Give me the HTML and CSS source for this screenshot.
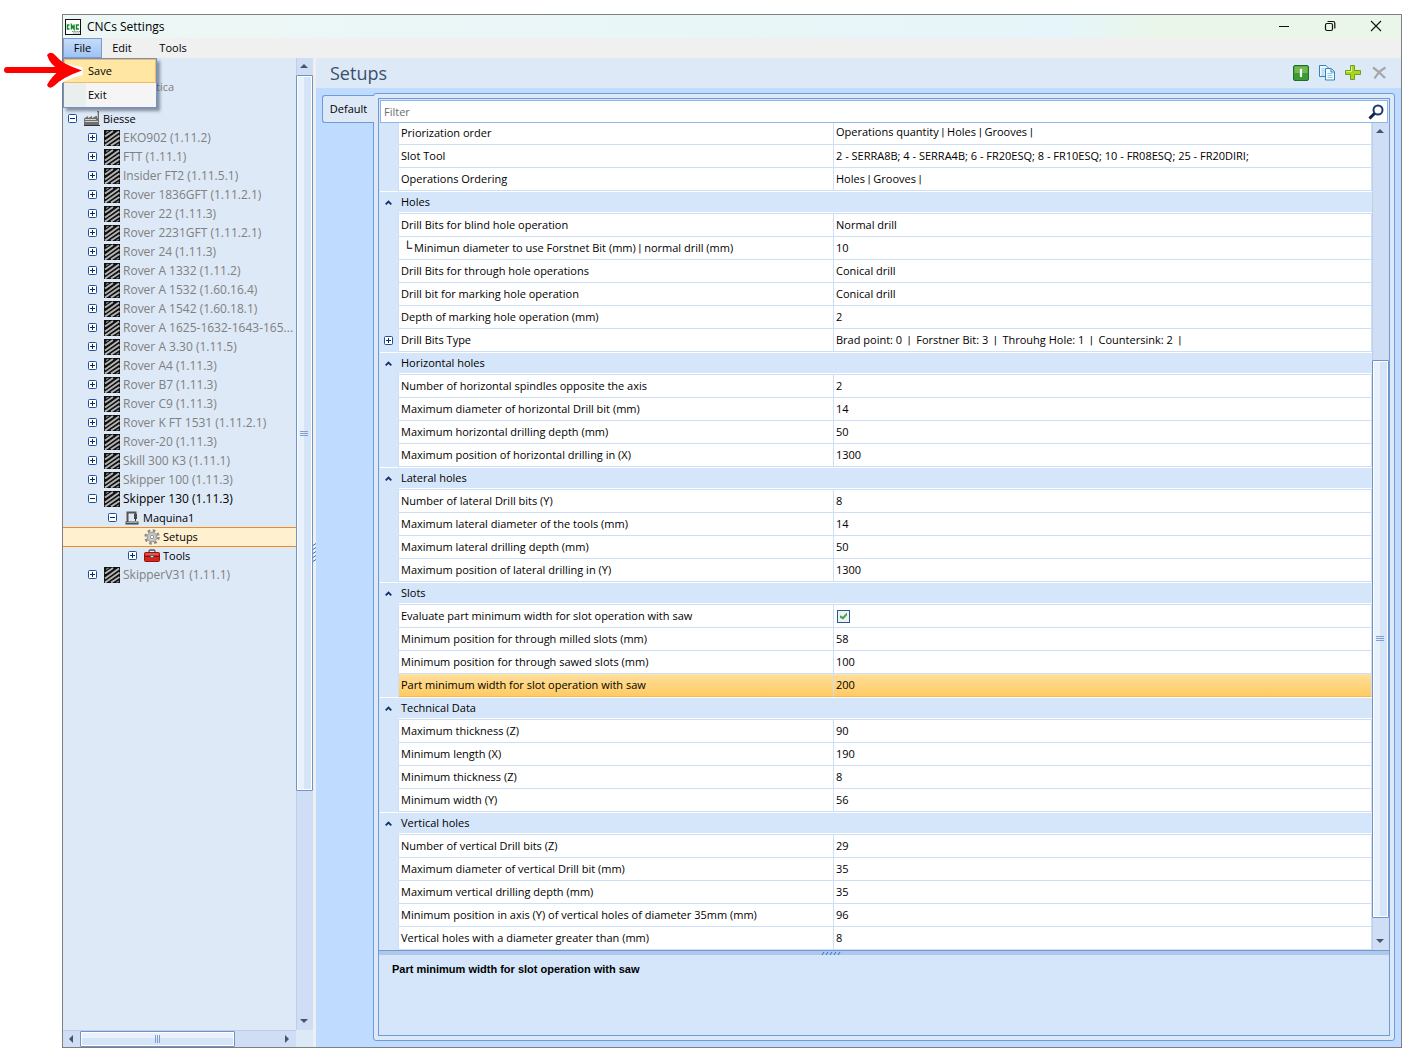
FILE: index.html
```
<!DOCTYPE html>
<html lang="en">
<head>
<meta charset="utf-8">
<title>CNCs Settings</title>
<link rel="stylesheet" href="styles.css">
</head>
<body>
<svg class="sprite" aria-hidden="true">
  <symbol id="plus" viewBox="0 0 9 9"><rect x=".5" y=".5" width="8" height="8" rx="1" fill="#fff" stroke="#1f4e9c"/><path d="M2 4.500h5M4.500 2v5" stroke="#0b2a66"/></symbol>
  <symbol id="minus" viewBox="0 0 9 9"><rect x=".5" y=".5" width="8" height="8" rx="1" fill="#fff" stroke="#1f4e9c"/><path d="M2 4.500h5" stroke="#0b2a66"/></symbol>
  <symbol id="machine" viewBox="0 0 16 16"><rect width="16" height="16" fill="#101010"/><path d="M1 6.500L9 1M1 11.500L15 1.500M1 15.500L15.500 5.500M7 15.500L15.500 10" stroke="#b4b4b4" stroke-width="2"/><path d="M2 2.500L4.500 1M12.500 15.500L15 14" stroke="#8a8a8a" stroke-width="1.300"/></symbol>
  <symbol id="caret" viewBox="0 0 7 5"><path d="M.7 4.300L3.500 1.500L6.300 4.300" fill="none" stroke="#10306b" stroke-width="1.800"/></symbol>
</svg>

<main class="window">
  <header class="titlebar">
    <svg class="app-icon" viewBox="0 0 16 16" aria-hidden="true"><rect x=".5" y=".5" width="15" height="15" fill="#fff" stroke="#111"/><path d="M4.500 6H2.500v4h2M6.500 10.500V6L9 10V5.500M14 6h-2.500v4H14" fill="none" stroke="#138a2c" stroke-width="1.500"/><path d="M7 12.500h8M8 14h7" stroke="#888" stroke-width="1.200" stroke-dasharray="1.500 .7"/></svg>
    <h1>CNCs Settings</h1>
    <div class="window-controls">
      <button aria-label="Minimize"><svg width="12" height="12"><path d="M1 6.500h10" stroke="#111"/></svg></button>
      <button aria-label="Restore"><svg width="12" height="12"><rect x="1.500" y="3.500" width="7" height="7" rx="1.500" fill="none" stroke="#111" stroke-width="1.200"/><path d="M3.500 1.500h5.500a1.800 1.800 0 0 1 1.800 1.800v5.200" fill="none" stroke="#111" stroke-width="1.200"/></svg></button>
      <button aria-label="Close"><svg width="12" height="12"><path d="M1 1l10 10M11 1L1 11" stroke="#111" stroke-width="1.100"/></svg></button>
    </div>
  </header>

  <nav class="menubar">
    <div class="menu open">
      <button class="menu-title">File</button>
      <div class="dropdown">
        <button class="highlighted">Save</button>
        <button>Exit</button>
      </div>
    </div>
    <div class="menu"><button class="menu-title">Edit</button></div>
    <div class="menu"><button class="menu-title wide">Tools</button></div>
  </nav>

  <div class="workspace">
    <aside class="sidebar">
      <div class="tree-area">
        <ul class="tree">
          <li class="off partial">tica</li>
          <li class="l0"><svg class="exp"><use href="#minus"/></svg><svg class="ico" viewBox="0 0 16 16"><path d="M0 14.500V7.500l4-2.500v2l4-2v2l4-2h1V0h2v14.500z" fill="#6f6f6f"/><path d="M1 8.500h11M1 10.500h13" stroke="#d0d0d0"/><path d="M0 14.500h16" stroke="#333"/><path d="M13.500 1v6" stroke="#bbb"/></svg>Biesse</li>
          <li class="l1 off"><svg class="exp"><use href="#plus"/></svg><svg class="ico"><use href="#machine"/></svg>EKO902 (1.11.2)</li>
          <li class="l1 off"><svg class="exp"><use href="#plus"/></svg><svg class="ico"><use href="#machine"/></svg>FTT (1.11.1)</li>
          <li class="l1 off"><svg class="exp"><use href="#plus"/></svg><svg class="ico"><use href="#machine"/></svg>Insider FT2 (1.11.5.1)</li>
          <li class="l1 off"><svg class="exp"><use href="#plus"/></svg><svg class="ico"><use href="#machine"/></svg>Rover 1836GFT (1.11.2.1)</li>
          <li class="l1 off"><svg class="exp"><use href="#plus"/></svg><svg class="ico"><use href="#machine"/></svg>Rover 22 (1.11.3)</li>
          <li class="l1 off"><svg class="exp"><use href="#plus"/></svg><svg class="ico"><use href="#machine"/></svg>Rover 2231GFT (1.11.2.1)</li>
          <li class="l1 off"><svg class="exp"><use href="#plus"/></svg><svg class="ico"><use href="#machine"/></svg>Rover 24 (1.11.3)</li>
          <li class="l1 off"><svg class="exp"><use href="#plus"/></svg><svg class="ico"><use href="#machine"/></svg>Rover A 1332 (1.11.2)</li>
          <li class="l1 off"><svg class="exp"><use href="#plus"/></svg><svg class="ico"><use href="#machine"/></svg>Rover A 1532 (1.60.16.4)</li>
          <li class="l1 off"><svg class="exp"><use href="#plus"/></svg><svg class="ico"><use href="#machine"/></svg>Rover A 1542 (1.60.18.1)</li>
          <li class="l1 off"><svg class="exp"><use href="#plus"/></svg><svg class="ico"><use href="#machine"/></svg>Rover A 1625-1632-1643-165...</li>
          <li class="l1 off"><svg class="exp"><use href="#plus"/></svg><svg class="ico"><use href="#machine"/></svg>Rover A 3.30 (1.11.5)</li>
          <li class="l1 off"><svg class="exp"><use href="#plus"/></svg><svg class="ico"><use href="#machine"/></svg>Rover A4 (1.11.3)</li>
          <li class="l1 off"><svg class="exp"><use href="#plus"/></svg><svg class="ico"><use href="#machine"/></svg>Rover B7 (1.11.3)</li>
          <li class="l1 off"><svg class="exp"><use href="#plus"/></svg><svg class="ico"><use href="#machine"/></svg>Rover C9 (1.11.3)</li>
          <li class="l1 off"><svg class="exp"><use href="#plus"/></svg><svg class="ico"><use href="#machine"/></svg>Rover K FT 1531 (1.11.2.1)</li>
          <li class="l1 off"><svg class="exp"><use href="#plus"/></svg><svg class="ico"><use href="#machine"/></svg>Rover-20 (1.11.3)</li>
          <li class="l1 off"><svg class="exp"><use href="#plus"/></svg><svg class="ico"><use href="#machine"/></svg>Skill 300 K3 (1.11.1)</li>
          <li class="l1 off"><svg class="exp"><use href="#plus"/></svg><svg class="ico"><use href="#machine"/></svg>Skipper 100 (1.11.3)</li>
          <li class="l1"><svg class="exp"><use href="#minus"/></svg><svg class="ico"><use href="#machine"/></svg>Skipper 130 (1.11.3)</li>
          <li class="l2"><svg class="exp"><use href="#minus"/></svg><svg class="ico" viewBox="0 0 16 16"><path d="M3.500 12V2.500h8V6" fill="none" stroke="#555" stroke-width="2"/><path d="M1.500 14.500v-3h13v3zM10 4h3v5h-3z" fill="#4a4a4a"/><path d="M2.500 12.500h11" stroke="#aaa"/><path d="M11.500 8v3" stroke="#333"/></svg>Maquina1</li>
          <li class="l3 selected"><svg class="ico" viewBox="0 0 16 16"><circle cx="8" cy="8" r="6.500" fill="none" stroke="#8d8d8d" stroke-width="2.500" stroke-dasharray="2.600 2.500"/><circle cx="8" cy="8" r="4.200" fill="#ddd" stroke="#999" stroke-width="2.200"/><circle cx="8" cy="8" r="4" fill="none" stroke="#c9c9c9"/><circle cx="8" cy="8" r="1.800" fill="#fff" stroke="#888"/></svg>Setups</li>
          <li class="l3"><svg class="exp"><use href="#plus"/></svg><svg class="ico" viewBox="0 0 16 16"><path d="M5 5V3.500q0-1.500 1.500-1.500h3q1.500 0 1.500 1.500V5" fill="none" stroke="#555" stroke-width="1.300"/><rect x=".5" y="4.500" width="15" height="9" rx="1" fill="#d8241f" stroke="#8e1512"/><path d="M1 8.500h14" stroke="#7d1210"/><path d="M1.500 6h13" stroke="#f4837c"/><rect x="6.500" y="7.500" width="3" height="2" fill="#ddd" stroke="#666"/></svg>Tools</li>
          <li class="l1 off"><svg class="exp"><use href="#plus"/></svg><svg class="ico"><use href="#machine"/></svg>SkipperV31 (1.11.1)</li>
        </ul>
        <div class="scroll horizontal">
          <button class="arrow left" aria-label="Scroll left"></button>
          <div class="thumb tree-x"><i class="grip"></i></div>
          <div class="track tree-x-rest"></div>
          <button class="arrow right" aria-label="Scroll right"></button>
        </div>
      </div>
      <div class="scroll vertical tree-scroll">
        <button class="arrow up" aria-label="Scroll up"></button>
        <div class="thumb tree-y"><i class="grip"></i></div>
        <div class="track tree-y-rest"></div>
        <button class="arrow down" aria-label="Scroll down"></button>
      </div>
    </aside>
    <div class="splitter"><svg width="3" height="20"><path d="M0 2.500l3-2M0 6.500l3-2M0 10.500l3-2M0 14.500l3-2M0 18.500l3-2" stroke="#2a6fd0"/></svg></div>

    <section class="content">
      <header class="page-head">
        <h2>Setups</h2>
        <div class="tools">
          <button aria-label="Enable"><svg width="16" height="16"><rect x=".5" y=".5" width="15" height="15" rx="1.500" fill="#3c9a35" stroke="#1f6f27"/><path d="M1.500 8V1.500h13V8z" fill="#74b854"/><path d="M8 4v8" stroke="#fff" stroke-width="2.200"/></svg></button>
          <button aria-label="Copy"><svg width="16" height="16"><path d="M.5.500h6.500l3 3v8H.5z" fill="#eef7fd" stroke="#2f83c0"/><path d="M2.500 4h3M2.500 6h4M2.500 8h3M2.500 10h3" stroke="#8fc4e6"/><path d="M6.500 3.500h5.500l3.500 3v8.500h-9z" fill="#f4fafe" stroke="#2f83c0"/><path d="M12 4v3h3" fill="none" stroke="#2f83c0"/><path d="M8.500 8.500h5M8.500 10.500h5M8.500 12.500h5" stroke="#8fc4e6"/></svg></button>
          <button aria-label="Add"><svg width="16" height="16"><path d="M5.500.500h4v5h6v4h-6v5h-4v-5h-5v-4h5z" fill="#a9d51c" stroke="#6f9f1c"/><path d="M6.500 1.500v5h-5" fill="none" stroke="#dcf08a"/></svg></button>
          <button aria-label="Remove"><svg width="16" height="16"><path d="M2 2.500q6 4 12 10.500M14.500 2.500Q8 6 3.500 13.500" fill="none" stroke="#a5a7aa" stroke-width="2.200"/></svg></button>
        </div>
      </header>

      <div class="tabs">
        <button class="tab">Default</button>
        <div class="tab-page">
          <div class="property-grid">
            <label class="filter"><input type="text" placeholder="Filter" aria-label="Filter"><svg width="16" height="16" aria-hidden="true"><circle cx="10" cy="6" r="4.500" fill="none" stroke="#1e3a70" stroke-width="2"/><path d="M6.500 9.500L1.500 14.500" stroke="#0d2150" stroke-width="3"/></svg></label>
            <div class="rows">
              <table>
                <colgroup><col class="c-gutter"><col class="c-name"><col></colgroup>
                <tbody>
                  <tr class="first"><td></td><td>Priorization order</td><td>Operations quantity <span class="bar">|</span> Holes <span class="bar">|</span> Grooves <span class="bar">|</span></td></tr>
                  <tr><td></td><td>Slot Tool</td><td>2 - SERRA8B; 4 - SERRA4B; 6 - FR20ESQ; 8 - FR10ESQ; 10 - FR08ESQ; 25 - FR20DIRI;</td></tr>
                  <tr><td></td><td>Operations Ordering</td><td>Holes <span class="bar">|</span> Grooves <span class="bar">|</span></td></tr>
                  <tr class="group"><td><svg class="caret"><use href="#caret"/></svg></td><th colspan="2">Holes</th></tr>
                  <tr><td></td><td>Drill Bits for blind hole operation</td><td>Normal drill</td></tr>
                  <tr><td></td><td><span class="child">└</span>Minimun diameter to use Forstnet Bit (mm) <span class="bar">|</span> normal drill (mm)</td><td>10</td></tr>
                  <tr><td></td><td>Drill Bits for through hole operations</td><td>Conical drill</td></tr>
                  <tr><td></td><td>Drill bit for marking hole operation</td><td>Conical drill</td></tr>
                  <tr><td></td><td>Depth of marking hole operation (mm)</td><td>2</td></tr>
                  <tr><td><svg class="exp"><use href="#plus"/></svg></td><td>Drill Bits Type</td><td class="pre">Brad point: 0  <span class="bar">|</span>  Forstner Bit: 3  <span class="bar">|</span>  Throuhg Hole: 1  <span class="bar">|</span>  Countersink: 2  <span class="bar">|</span></td></tr>
                  <tr class="group"><td><svg class="caret"><use href="#caret"/></svg></td><th colspan="2">Horizontal holes</th></tr>
                  <tr><td></td><td>Number of horizontal spindles opposite the axis</td><td>2</td></tr>
                  <tr><td></td><td>Maximum diameter of horizontal Drill bit (mm)</td><td>14</td></tr>
                  <tr><td></td><td>Maximum horizontal drilling depth (mm)</td><td>50</td></tr>
                  <tr><td></td><td>Maximum position of horizontal drilling in (X)</td><td>1300</td></tr>
                  <tr class="group"><td><svg class="caret"><use href="#caret"/></svg></td><th colspan="2">Lateral holes</th></tr>
                  <tr><td></td><td>Number of lateral Drill bits (Y)</td><td>8</td></tr>
                  <tr><td></td><td>Maximum lateral diameter of the tools (mm)</td><td>14</td></tr>
                  <tr><td></td><td>Maximum lateral drilling depth (mm)</td><td>50</td></tr>
                  <tr><td></td><td>Maximum position of lateral drilling in (Y)</td><td>1300</td></tr>
                  <tr class="group"><td><svg class="caret"><use href="#caret"/></svg></td><th colspan="2">Slots</th></tr>
                  <tr><td></td><td><label for="evaluate">Evaluate part minimum width for slot operation with saw</label></td><td><input type="checkbox" id="evaluate" checked></td></tr>
                  <tr><td></td><td>Minimum position for through milled slots (mm)</td><td>58</td></tr>
                  <tr><td></td><td>Minimum position for through sawed slots (mm)</td><td>100</td></tr>
                  <tr class="current"><td></td><td>Part minimum width for slot operation with saw</td><td>200</td></tr>
                  <tr class="group"><td><svg class="caret"><use href="#caret"/></svg></td><th colspan="2">Technical Data</th></tr>
                  <tr><td></td><td>Maximum thickness (Z)</td><td>90</td></tr>
                  <tr><td></td><td>Minimum length (X)</td><td>190</td></tr>
                  <tr><td></td><td>Minimum thickness (Z)</td><td>8</td></tr>
                  <tr><td></td><td>Minimum width (Y)</td><td>56</td></tr>
                  <tr class="group"><td><svg class="caret"><use href="#caret"/></svg></td><th colspan="2">Vertical holes</th></tr>
                  <tr><td></td><td>Number of vertical Drill bits (Z)</td><td>29</td></tr>
                  <tr><td></td><td>Maximum diameter of vertical Drill bit (mm)</td><td>35</td></tr>
                  <tr><td></td><td>Maximum vertical drilling depth (mm)</td><td>35</td></tr>
                  <tr><td></td><td>Minimum position in axis (Y) of vertical holes of diameter 35mm (mm)</td><td>96</td></tr>
                  <tr><td></td><td>Vertical holes with a diameter greater than (mm)</td><td>8</td></tr>
                </tbody>
              </table>
              <div class="scroll vertical">
                <button class="arrow up" aria-label="Scroll up"></button>
                <div class="track grid-y-above"></div>
                <div class="thumb grid-y"><i class="grip"></i></div>
                <div class="track grid-y-below"></div>
                <button class="arrow down" aria-label="Scroll down"></button>
              </div>
            </div>
            <div class="help-splitter"><svg width="20" height="3"><path d="M1 3l2-3M5 3l2-3M9 3l2-3M13 3l2-3M17 3l2-3" stroke="#2a6fd0"/></svg></div>
            <p class="help">Part minimum width for slot operation with saw</p>
          </div>
        </div>
      </div>
    </section>
  </div>
</main>

<svg class="pointer" width="84" height="40" viewBox="0 0 84 40" aria-hidden="true"><path d="M7 20H70" stroke="#fff" stroke-width="8" stroke-linecap="round"/><path d="M51 5Q57 17 82 20Q62 24 51 36" fill="none" stroke="#fff" stroke-width="8" stroke-linecap="round"/><path d="M7 19L70 19" stroke="#f00" stroke-width="6" stroke-linecap="round"/><path d="M47 4Q51 -1 56 5Q62 13 82 19.500Q63 26 54 35Q49 39 47 34Q51 26 60 19Q50 14 47 4z" fill="#f00"/></svg>
</body>
</html>
```
FILE: styles.css
```
* { box-sizing: border-box; }

body {
  margin: 0;
  min-height: 100vh;
  padding: 14px 21px 12px 62px;
  display: flex;
  background: #fff;
  color: #000;
  font: 11px/16px "Open Sans", "Noto Sans", sans-serif;
}

button, input { font: inherit; color: inherit; }
button { padding: 0; border: 0; background: none; }
h1, h2, p, ul { margin: 0; padding: 0; }
svg { flex: none; }
.sprite { position: absolute; width: 0; height: 0; }

.window {
  flex: 1;
  min-width: 0;
  display: flex;
  flex-direction: column;
  border: 1px solid #7d7f83;
}

/* title bar */
.titlebar {
  height: 23px;
  display: flex;
  align-items: center;
  padding: 0 19px 0 2px;
  background: linear-gradient(90deg, #edf7f5, #e6f5f9 75%, #eaf6e9 82%);
}
.app-icon { width: 16px; height: 16px; }
.titlebar h1 { flex: 1; margin-left: 6px; font-size: 12px; font-weight: 400; }
.window-controls { display: flex; gap: 34px; padding-bottom: 2px; }
.window-controls button { width: 12px; height: 12px; }
.window-controls svg { display: block; }

/* menu bar */
.menubar { height: 20px; display: flex; background: #f0f0f0; }
.menu { position: relative; display: flex; }
.menu-title { width: 40px; border: 1px solid transparent; line-height: 16px; }
.menu-title.wide { width: 62px; }
.menu.open .menu-title {
  width: 39px;
  border-color: #7a9bd0;
  background: linear-gradient(#c6dcf9, #9fc3f3);
}
.dropdown {
  position: absolute;
  z-index: 2;
  top: 20px;
  left: 0;
  width: 94px;
  border: 1px solid #6f93c9;
  background: linear-gradient(90deg, #e9eeee 22px, #f5f5f5 22px);
  box-shadow: 3px 3px 3px rgba(60, 70, 90, .55);
}
.dropdown button {
  display: block;
  width: 100%;
  height: 24px;
  padding-left: 23px;
  border: 1px solid transparent;
  text-align: left;
}
.dropdown .highlighted { border-color: #f5b95f; background: #ffe6a2; }

.workspace { flex: 1; display: flex; }

/* machine tree */
.sidebar { width: 250px; display: flex; background: #dde9f7; }
.tree-area { flex: 1; min-width: 0; display: flex; flex-direction: column; }
.tree { flex: 1; padding-top: 19px; list-style: none; }
.tree li {
  height: 19px;
  display: flex;
  align-items: center;
  gap: 3px;
  white-space: nowrap;
}
.tree .exp { margin-right: 4px; }
.tree .off { color: #808080; }
.tree .partial { padding-left: 93px; margin-bottom: 13px; }
.tree .l0 { padding-left: 5px; }
.tree .l1 { padding-left: 25px; font-size: 12px; }
.tree .l2 { padding-left: 45px; }
.tree .l3 { padding-left: 65px; }
.tree .selected {
  height: 20px;
  margin-bottom: -1px;
  padding-left: 81px;
  border: solid #f08a1d;
  border-width: 1px 0;
  background: #fff0d0;
}
.exp { display: block; width: 9px; height: 9px; }
.ico { width: 16px; height: 16px; }

/* scroll bars */
.scroll { display: flex; background: #cfdef4; }
.scroll.vertical { width: 17px; flex-direction: column; }
.scroll.horizontal { height: 17px; border-top: 1px solid #bccfe9; }
.arrow { width: 16px; height: 16px; display: flex; align-items: center; justify-content: center; }
.arrow::before { content: ""; border: 4px solid transparent; }
.arrow.up::before { border-bottom-color: #46536f; border-top-width: 0; }
.arrow.down::before { border-top-color: #46536f; border-bottom-width: 0; }
.arrow.left::before { border-right-color: #46536f; border-left-width: 0; }
.arrow.right::before { border-left-color: #46536f; border-right-width: 0; }
.vertical .arrow { height: 17px; padding-bottom: 1px; }
.horizontal .arrow { width: 17px; padding-right: 1px; }
.vertical .track, .vertical .arrow { box-shadow: inset 1px 0 #bccfe9; }
.thumb {
  display: flex;
  align-items: center;
  justify-content: center;
  border: 1px solid #6f93c9;
  border-radius: 1px;
  box-shadow: inset 0 0 0 1px #fff;
}
.vertical .thumb { background: linear-gradient(90deg, #e9f1fc 45%, #d6e4f7 45%); }
.horizontal .thumb { background: linear-gradient(#e9f1fc 45%, #d6e4f7 45%); }
.vertical .thumb { padding-right: 1px; }
.grip { width: 8px; height: 5px; background: repeating-linear-gradient(#7f9fd0 0 1px, transparent 1px 2px); }
.horizontal .grip { width: 5px; height: 8px; background: repeating-linear-gradient(90deg, #7f9fd0 0 1px, transparent 1px 2px); }
.tree-scroll { padding-bottom: 17px; background: linear-gradient(#cfdef4, #cfdef4) 0 0 / 100% calc(100% - 17px) no-repeat; }
.tree-x { flex: 154; }
.tree-x-rest { flex: 44; }
.tree-y { flex: 716; }
.tree-y-rest { flex: 222; }
.grid-y-above { flex: 220; }
.grid-y { flex: 557; }
.grid-y-below { flex: 15; }

.splitter { width: 3px; display: flex; align-items: center; background: #efefef; }

/* content */
.content { flex: 1; min-width: 0; display: flex; flex-direction: column; background: #bfdbff; }
.page-head {
  height: 30px;
  padding: 0 14px;
  display: flex;
  align-items: center;
  justify-content: space-between;
  background: #dde9f7;
}
.page-head h2 { font-size: 18px; line-height: 24px; font-weight: 400; color: #3b4f6d; }
.tools { display: flex; gap: 10px; }
.tools button, .tools svg { display: block; width: 16px; height: 16px; }

.tabs { flex: 1; display: flex; align-items: flex-start; padding: 5px 6px 6px; }
.tab {
  position: relative;
  z-index: 1;
  width: 52px;
  height: 28px;
  margin: 2px -1px 0 0;
  border: 1px solid #6f9bdc;
  border-right: 0;
  border-radius: 3px 0 0 3px;
  background: #dde9f7;
}
.tab-page {
  flex: 1;
  align-self: stretch;
  min-width: 0;
  display: flex;
  padding: 4px;
  border: 1px solid #6f9bdc;
  border-radius: 3px;
  background: #dde9f7;
}
.property-grid {
  flex: 1;
  min-width: 0;
  display: flex;
  flex-direction: column;
  border: 1px solid #6f9bdc;
  background: #d5e6fb;
}
.filter {
  height: 23px;
  margin: 1px 1px 0;
  padding-right: 3px;
  display: flex;
  align-items: center;
  border: 1px solid #91b5e8;
  background: #fff;
}
.filter input { flex: 1; min-width: 0; height: 20px; padding: 0 3px; border: 0; outline: 0; background: none; }
.filter input::placeholder { color: #6d6d6d; opacity: 1; }

.rows { display: flex; padding-left: 1px; }
table { flex: 1; min-width: 0; table-layout: fixed; border-collapse: separate; border-spacing: 0; background: #fff; }
.c-gutter { width: 19px; }
.c-name { width: 435px; }
td, th { height: 23px; padding: 0 2px; border: 0 solid #cddff6; border-width: 0 1px 1px 0; font-weight: 400; text-align: left; white-space: nowrap; overflow: hidden; }
.first td { height: 22px; padding-bottom: 2px; }
td:first-child { padding: 0 0 0 4px; border-bottom-color: #d5e6fb; background: #d5e6fb; }
.group td:first-child { border-right-color: #d5e6fb; box-shadow: inset 0 1px #fff; }
.group th { border-right: 0; background: #d5e6fb; box-shadow: inset 0 1px #fff, inset 0 -1px #fff; }
.current td:not(:first-child) { border-bottom-color: #f8b84e; background: linear-gradient(#ffdf9c, #ffcb62); box-shadow: inset 0 1px #ffe3ad; }
.pre { white-space: pre; }
.bar { font-family: Roboto, sans-serif; }
.caret { display: block; width: 7px; height: 5px; margin-left: 1px; }
.child { display: inline-block; width: 11px; margin-left: 2px; font-size: 13px; line-height: 10px; }
input[type="checkbox"] {
  appearance: none;
  display: block;
  width: 13px;
  height: 13px;
  margin: 0 0 0 1px;
  border: 1px solid #31578f;
  background: #edf1f5;
}
input[type="checkbox"]:checked::after {
  content: "";
  display: block;
  width: 7px;
  height: 7px;
  margin: 2px;
  background: #43a845;
  clip-path: polygon(0 40%, 40% 60%, 100% 0, 100% 40%, 45% 100%, 0 75%);
}

.help-splitter { height: 5px; padding: 1px 106px 0 0; border-top: 1px solid #6f9bdc; background: #b0c8e8; display: flex; justify-content: center; }
.help { flex: 1; padding: 6px 13px; font: bold 11px/16px "Liberation Sans", Arial, sans-serif; }

/* callout arrow laid over the window */
.pointer { position: absolute; z-index: 3; top: 51px; left: 0; }
```
